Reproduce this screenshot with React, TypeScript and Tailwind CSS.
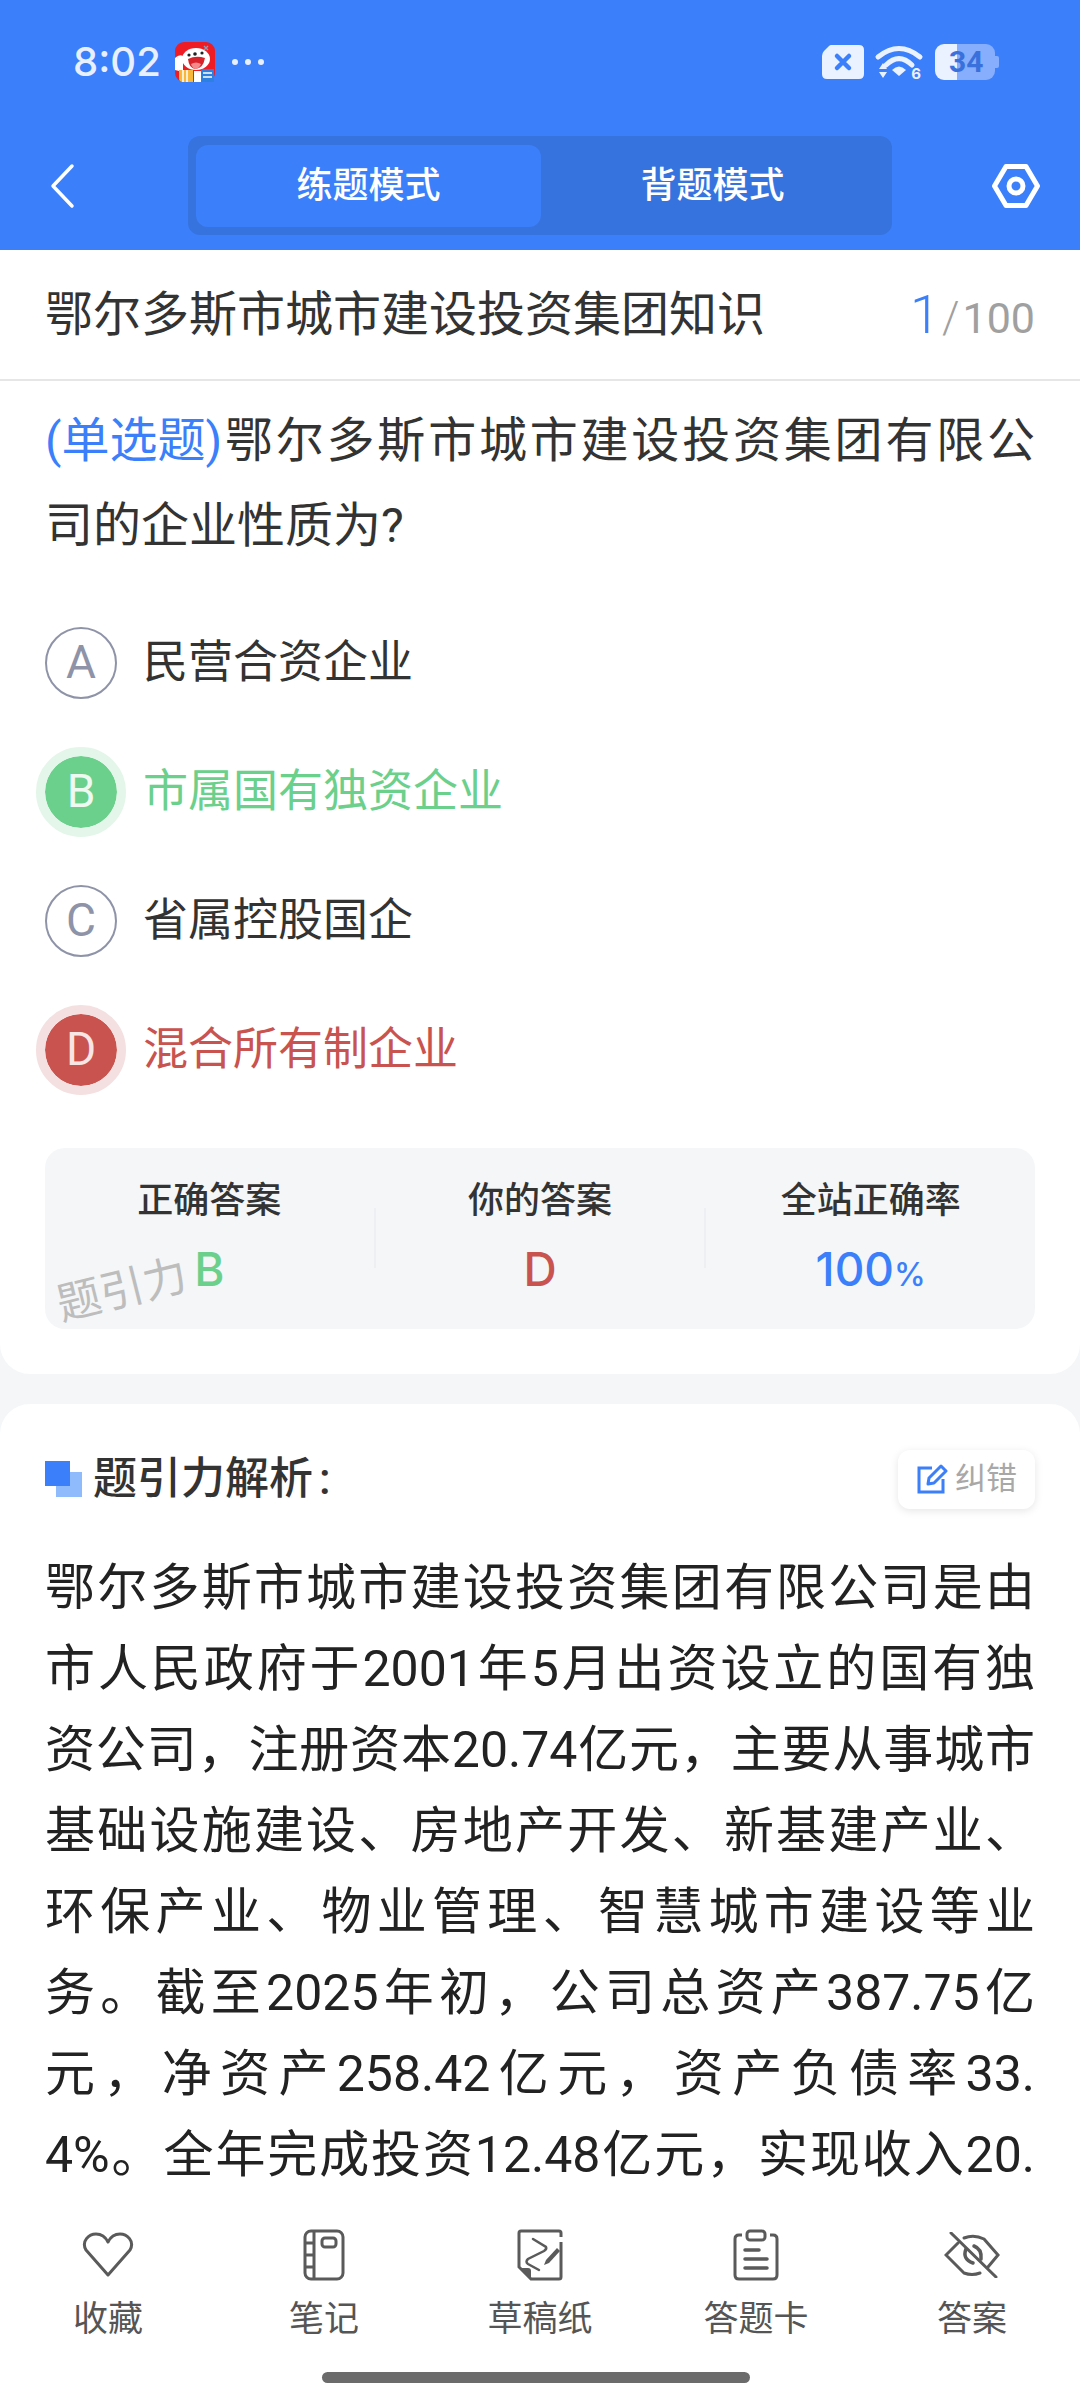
const FONT = "font-['Roboto','Noto_Sans_CJK_SC',sans-serif]";

const ANALYSIS = [
  "鄂尔多斯市城市建设投资集团有限公司是由",
  "市人民政府于2001年5月出资设立的国有独",
  "资公司，注册资本20.74亿元，主要从事城市",
  "基础设施建设、房地产开发、新基建产业、",
  "环保产业、物业管理、智慧城市建设等业",
  "务。截至2025年初，公司总资产387.75亿",
  "元，净资产258.42亿元，资产负债率33.",
  "4%。全年完成投资12.48亿元，实现收入20.",
];

function Mascot() {
  return (
    <svg viewBox="0 0 40 40" className="h-[40px] w-[40px]">
      <rect width="40" height="40" rx="9" fill="#ee1c25" />
      <path d="M0 16 Q4 12 8 14 L8 30 L0 28 Z" fill="#fff" />
      <ellipse cx="21" cy="17" rx="14" ry="11" fill="#fff" />
      <circle cx="14" cy="13" r="1.6" fill="#222" />
      <circle cx="27" cy="11" r="1.6" fill="#222" />
      <circle cx="20" cy="12" r="1.8" fill="#222" />
      <path d="M13 17 Q21 13 30 16 Q28 27 20 27 Q14 26 13 17 Z" fill="#d8232a" />
      <path d="M16 22 Q21 19 26 22 Q24 27 20 27 Q17 26 16 22 Z" fill="#f58a8a" />
      <path d="M4 28 H18 V40 H8 Q4 40 4 36 Z" fill="#f6b73c" />
      <path d="M8 28 V40 M12 28 V40" stroke="#fff" strokeWidth="1.5" />
      <path d="M19 29 H35 V40 H19 Z" fill="#fff" />
      <rect x="26" y="27" width="13" height="13" fill="#2d7fe0" />
      <path d="M28 31 H37 M28 35 H37" stroke="#fff" strokeWidth="1.6" />
      <path d="M29 4 L33 8 M33 4 L29 8" stroke="#8d9bb5" strokeWidth="1.4" />
    </svg>
  );
}

function StatusIcons() {
  return (
    <div className="flex items-center gap-[10px]">
      <svg viewBox="0 0 44 36" className="h-[36px] w-[44px]">
        <path d="M10 1 H38 Q43 1 43 6 V30 Q43 35 38 35 H6 Q1 35 1 30 V12 Q1 9 3 7 L8 2 Q9 1 10 1 Z" fill="#eaf1ff" />
        <path d="M16 12 L28 24 M28 12 L16 24" stroke="#3b7ffa" strokeWidth="4.5" strokeLinecap="round" />
      </svg>
      <svg viewBox="0 0 50 38" className="h-[38px] w-[50px] overflow-visible">
        <path d="M3 14 Q24 -3 45 14" fill="none" stroke="#eaf1ff" strokeWidth="5" strokeLinecap="round" />
        <path d="M11 22 Q24 9 37 22" fill="none" stroke="#eaf1ff" strokeWidth="5" strokeLinecap="round" />
        <path d="M17 27 Q24 20 31 27 L24 33 Z" fill="#eaf1ff" />
        <path d="M4 26 L8 20 L12 26 Z M4 29 H12 L8 35 Z" fill="#eaf1ff" />
        <text x="41" y="36" fontSize="15" fontWeight="700" fill="#eaf1ff" textAnchor="middle" fontFamily="Inter">6</text>
      </svg>
      <div className="relative flex h-[36px] w-[65px] items-center">
        <div className="h-full w-[22px] rounded-l-[9px] bg-[#eaf1ff]" />
        <div className="h-full w-[38px] rounded-r-[9px] bg-[#86aefc]" />
        <div className="h-[12px] w-[4px] rounded-r-[2px] bg-[#86aefc]" />
        <span className="absolute left-[14px] top-0 text-[30px] leading-[36px] font-bold text-[#3a70dc]">34</span>
      </div>
    </div>
  );
}

function Option({ letter, text, state }: { letter: string; text: string; state?: "right" | "wrong" }) {
  const textColor = state === "right" ? "text-[#6bd08b]" : state === "wrong" ? "text-[#c9534f]" : "text-[#333333]";
  let circle = "border-2 border-[#8e93a8] text-[#8e93a8]";
  if (state === "right") circle = "bg-[#6bd08b] text-[#eef9f1] outline-[9px] outline-[#e3f6e9]";
  if (state === "wrong") circle = "bg-[#c9534f] text-[#f8e6e5] outline-[9px] outline-[#f4e0e0]";
  return (
    <div className="flex h-[129px] items-center gap-[26px]">
      <div className={"flex h-[72px] w-[72px] items-center justify-center rounded-full text-[46px] " + circle}>{letter}</div>
      <span className={"text-[45px] " + textColor}>{text}</span>
    </div>
  );
}

function Stat({ label, children }: { label: string; children: React.ReactNode }) {
  return (
    <div className="flex flex-1 flex-col items-center">
      <span className="text-[36px] leading-[50px] font-medium text-[#333333]">{label}</span>
      <div className="mt-[18px] flex h-[50px] items-center font-['Inter'] text-[46px] font-medium">{children}</div>
    </div>
  );
}

function NavItem({ label, children }: { label: string; children: React.ReactNode }) {
  return (
    <div className="flex w-[216px] flex-col items-center">
      <div className="flex h-[60px] items-center justify-center">{children}</div>
      <span className="mt-[10px] text-[35px] leading-[50px] text-[#555555]">{label}</span>
    </div>
  );
}

export default function App() {
  return (
    <div className={"flex h-[2400px] w-[1080px] flex-col overflow-hidden bg-[#f4f6f8] " + FONT}>
      <header className="h-[250px] shrink-0 bg-[#3b7ffa]">
        <div className="flex h-[124px] items-center justify-between pl-[73px] pr-[80px]">
          <div className="flex items-center">
            <span className="font-['Inter'] text-[40px] font-medium text-[#e8f0ff]">8:02</span>
            <div className="ml-[14px]"><Mascot /></div>
            <div className="ml-[17px] flex gap-[7px]">
              <i className="h-[6px] w-[6px] rounded-full bg-[#e8f0ff]" />
              <i className="h-[6px] w-[6px] rounded-full bg-[#e8f0ff]" />
              <i className="h-[6px] w-[6px] rounded-full bg-[#e8f0ff]" />
            </div>
          </div>
          <StatusIcons />
        </div>
        <div className="flex h-[123px] items-center">
          <svg viewBox="0 0 30 48" className="ml-[47px] h-[48px] w-[30px]">
            <path d="M25 4 L6 24 L25 44" fill="none" stroke="#fff" strokeWidth="3.5" strokeLinecap="round" strokeLinejoin="round" />
          </svg>
          <div className="ml-[111px] flex h-[99px] w-[704px] items-center rounded-[12px] bg-[#3673de] px-[8px]">
            <div className="flex h-[82px] w-[345px] items-center justify-center rounded-[12px] bg-[#3b7ffa] text-[36px] font-medium text-white">练题模式</div>
            <div className="flex h-[82px] flex-1 items-center justify-center text-[36px] font-medium text-white">背题模式</div>
          </div>
          <svg viewBox="0 0 48 44" className="ml-[100px] h-[44px] w-[48px]">
            <path d="M14 2.5 H34 L45.5 22 L34 41.5 H14 L2.5 22 Z" fill="none" stroke="#fff" strokeWidth="5" strokeLinejoin="round" />
            <circle cx="24" cy="22" r="7" fill="none" stroke="#fff" strokeWidth="5" />
          </svg>
        </div>
      </header>

      <main className="min-h-0 flex-1 overflow-hidden">
        <section className="rounded-b-[30px] bg-white px-[45px] pb-[45px]">
          <div className="-mx-[45px] flex h-[131px] items-center justify-between border-b-2 border-[#e6e6e6] px-[45px]">
            <span className="text-[48px] text-[#333333]">鄂尔多斯市城市建设投资集团知识</span>
            <span className="flex items-baseline text-[#a0a0a0]">
              <span className="text-[54px] font-light text-[#3b7ffa]">1</span>
              <span className="ml-[2px] text-[44px] font-light">/</span>
              <span className="ml-[3px] text-[43px]">100</span>
            </span>
          </div>
          <p className="pt-[17px] text-justify text-[48px] leading-[85px] text-[#333333]">
            <span className="inline-block text-[#3b7ffa]">(单选题)</span>鄂尔多斯市城市建设投资集团有限公司的企业性质为?
          </p>
          <div className="mt-[30px]">
            <Option letter="A" text="民营合资企业" />
            <Option letter="B" text="市属国有独资企业" state="right" />
            <Option letter="C" text="省属控股国企" />
            <Option letter="D" text="混合所有制企业" state="wrong" />
          </div>
          <div className="relative mt-[34px] flex h-[181px] items-start rounded-[20px] bg-[#f4f6f8] pt-[28px]">
            <Stat label="正确答案"><span className="text-[#6bd08b]">B</span></Stat>
            <div className="mt-[32px] h-[60px] w-[2px] bg-[#edeff2]" />
            <Stat label="你的答案"><span className="text-[#c9534f]">D</span></Stat>
            <div className="mt-[32px] h-[60px] w-[2px] bg-[#edeff2]" />
            <Stat label="全站正确率">
              <span className="text-[#3b7ffa]">100<span className="text-[32px]">%</span></span>
            </Stat>
            <span className="absolute left-[11px] top-[117px] -rotate-[14deg] text-[44px] leading-[50px] text-[#bdbdbd]">题引力</span>
          </div>
        </section>

        <section className="mt-[30px] rounded-t-[30px] bg-white px-[45px] pt-[42px]">
          <div className="flex items-center justify-between">
            <div className="flex items-center gap-[11px]">
              <div className="relative h-[36px] w-[37px]">
                <div className="absolute bottom-0 right-0 h-[25px] w-[26px] bg-[#8fbbfd]" />
                <div className="absolute left-0 top-0 h-[25px] w-[25px] bg-[#3b7ffa]" />
              </div>
              <span className="text-[44px] font-medium text-[#333333]">题引力解析<span className="ml-[6px]">:</span></span>
            </div>
            <div className="flex h-[59px] w-[137px] items-center justify-center gap-[7px] rounded-[12px] bg-white shadow-[0_2px_8px_rgba(0,0,0,0.1)]">
              <svg viewBox="0 0 32 32" className="h-[32px] w-[32px]">
                <path d="M16 5 H3 V29 H27 V16" fill="none" stroke="#3b7ffa" strokeWidth="3" />
                <path d="M12 21 L13 15 L25 3 L30 8 L18 20 Z" fill="none" stroke="#3b7ffa" strokeWidth="3" strokeLinejoin="round" />
              </svg>
              <span className="text-[31px] text-[#a8a8a8]">纠错</span>
            </div>
          </div>
          <div className="mt-[36px] text-[50px] leading-[81px] text-[#222222]">
            {ANALYSIS.map((line) => (
              <p key={line} className="whitespace-nowrap text-justify [text-align-last:justify]">{line}</p>
            ))}
          </div>
        </section>
      </main>

      <nav className="h-[210px] shrink-0 bg-white pt-[35px]">
        <div className="flex">
          <NavItem label="收藏">
            <svg viewBox="0 0 52 46" className="h-[46px] w-[52px]">
              <path d="M26 43 L4 18 C-1 9 7 2 14 2 C20 2 24 6 26 10 C28 6 32 2 38 2 C45 2 53 9 48 18 Z" fill="none" stroke="#5a5a5a" strokeWidth="3" strokeLinejoin="round" />
            </svg>
          </NavItem>
          <NavItem label="笔记">
            <svg viewBox="0 0 42 52" className="h-[52px] w-[42px]">
              <rect x="2" y="2" width="38" height="48" rx="6" fill="none" stroke="#5a5a5a" strokeWidth="3" />
              <path d="M11 2 V50 M2 14 H11 M2 26 H11 M2 38 H11" stroke="#5a5a5a" strokeWidth="3" fill="none" />
              <rect x="19" y="9" width="14" height="9" rx="3" fill="none" stroke="#5a5a5a" strokeWidth="3" />
            </svg>
          </NavItem>
          <NavItem label="草稿纸">
            <svg viewBox="0 0 46 52" className="h-[52px] w-[46px]">
              <path d="M44 13 V48 Q44 50 42 50 H14 L2 38 V4 Q2 2 4 2 H42 Q44 2 44 4 V8" fill="none" stroke="#5a5a5a" strokeWidth="3" />
              <path d="M3 39 H11 Q14 39 14 42 V49 Z" fill="#5a5a5a" />
              <path d="M16 10 L29 18 Q30 20 27 22 L11 30 Q8 33 11 35 L22 41" fill="none" stroke="#5a5a5a" strokeWidth="2.5" strokeLinecap="round" />
              <path d="M27 36 L29 31 L40 19 L43 22 L32 34 Z" fill="#5a5a5a" />
            </svg>
          </NavItem>
          <NavItem label="答题卡">
            <svg viewBox="0 0 46 52" className="h-[52px] w-[46px]">
              <path d="M9 6 H6 Q2 6 2 10 V46 Q2 50 6 50 H40 Q44 50 44 46 V10 Q44 6 40 6 H37" fill="none" stroke="#5a5a5a" strokeWidth="3" />
              <rect x="14" y="2" width="18" height="9" rx="3" fill="none" stroke="#5a5a5a" strokeWidth="3" />
              <path d="M12 21 H26 M12 30 H34 M12 39 H34" stroke="#5a5a5a" strokeWidth="3.5" strokeLinecap="round" />
            </svg>
          </NavItem>
          <NavItem label="答案">
            <svg viewBox="0 0 56 46" className="h-[46px] w-[56px]">
              <path d="M14 11 L2 23 L20 41 Q28 44 36 41" fill="none" stroke="#5a5a5a" strokeWidth="3" strokeLinecap="round" />
              <path d="M20 6 Q30 2 40 7 L54 23 L44 35" fill="none" stroke="#5a5a5a" strokeWidth="3" strokeLinecap="round" />
              <path d="M22 17 Q18 27 29 31 M30 14 Q38 17 37 27" fill="none" stroke="#5a5a5a" strokeWidth="3.5" strokeLinecap="round" />
              <path d="M7 1 L52 45" stroke="#5a5a5a" strokeWidth="3" strokeLinecap="round" />
            </svg>
          </NavItem>
        </div>
        <div className="ml-[322px] mt-[27px] h-[11px] w-[428px] rounded-full bg-[#6b6b6b]" />
      </nav>
    </div>
  );
}
